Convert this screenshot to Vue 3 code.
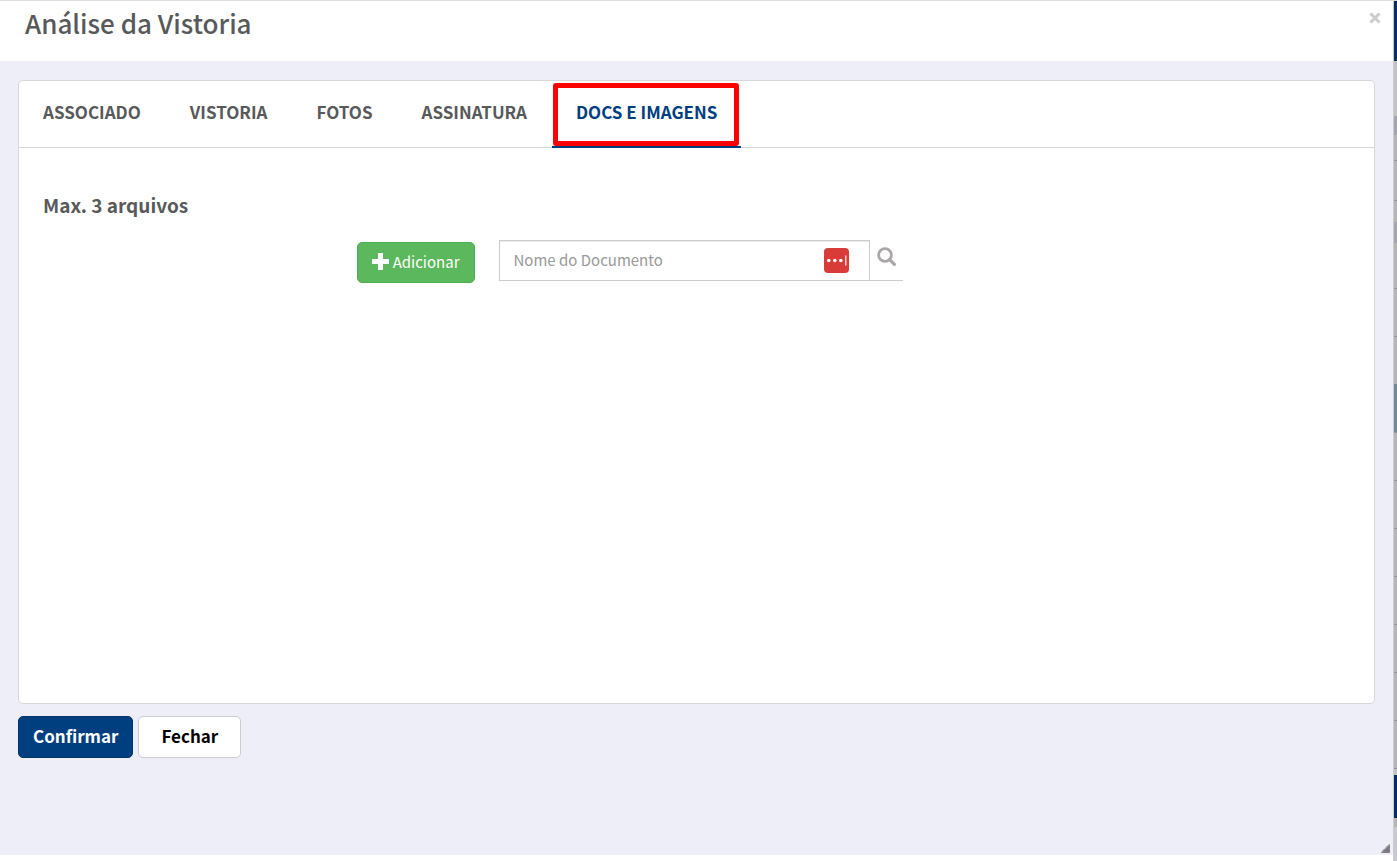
<template>
  <div class="page">
    <section class="dialog" role="dialog" aria-labelledby="dialog-title">
      <header class="dialog-header">
        <h1 id="dialog-title" class="dialog-title">Análise da Vistoria</h1>
        <button class="close" type="button" aria-label="Fechar janela">
          <svg width="12" height="12" viewBox="0 0 12 12" aria-hidden="true">
            <path d="M1.5 1.5l9 9M10.5 1.5l-9 9" stroke="currentColor" stroke-width="3" />
          </svg>
        </button>
      </header>

      <main class="dialog-body">
        <div class="panel">
          <nav class="tabs" role="tablist">
            <button
              v-for="tab in tabs"
              :key="tab"
              class="tab"
              :class="{ active: tab === activeTab }"
              type="button"
              role="tab"
              :aria-selected="tab === activeTab"
              @click="activeTab = tab"
            >
              {{ tab }}
            </button>
          </nav>

          <div class="panel-content" role="tabpanel">
            <h2 class="limit">Max. 3 arquivos</h2>
            <form class="upload" @submit.prevent>
              <button class="btn-add" type="button">
                <svg width="17" height="17" viewBox="0 0 17 17" aria-hidden="true">
                  <path d="M6 0h5v6h6v5h-6v6H6v-6H0V6h6z" fill="currentColor" />
                </svg>
                Adicionar
              </button>
              <div class="search">
                <div class="field">
                  <input
                    v-model="documentName"
                    class="field-input"
                    type="text"
                    placeholder="Nome do Documento"
                    aria-label="Nome do Documento"
                  />
                  <svg class="field-badge" width="25" height="25" viewBox="0 0 25 25" aria-hidden="true">
                    <rect width="25" height="25" rx="4" fill="#d93b38" />
                    <circle cx="4.8" cy="12.5" r="1.8" fill="#fff" />
                    <circle cx="10.8" cy="12.5" r="1.8" fill="#fff" />
                    <circle cx="16.8" cy="12.5" r="1.8" fill="#fff" />
                    <path d="M21.8 7.5v10" stroke="#fff" stroke-width="1.2" />
                  </svg>
                </div>
                <button class="btn-search" type="submit" aria-label="Pesquisar">
                  <svg width="19" height="19" viewBox="0 0 19 19" aria-hidden="true">
                    <circle cx="8" cy="8" r="6.4" fill="none" stroke="currentColor" stroke-width="2.8" />
                    <path d="M12.6 12.6l4.8 4.8" stroke="currentColor" stroke-width="3.2" stroke-linecap="round" />
                  </svg>
                </button>
              </div>
            </form>
          </div>
        </div>

        <div class="actions">
          <button class="btn btn-primary" type="button">Confirmar</button>
          <button class="btn btn-default" type="button">Fechar</button>
        </div>

        <svg class="grip" width="9" height="9" viewBox="0 0 9 9" aria-hidden="true">
          <path d="M0 9L9 0v9z" fill="#8a8489" />
          <path d="M0 8.5L8.5 0M3 8.5L8.5 3M6 8.5L8.5 6" stroke="#4b464a" stroke-dasharray="1 1" />
        </svg>
      </main>
    </section>

    <div class="backdrop" aria-hidden="true"></div>
  </div>
</template>

<script setup>
import { ref } from 'vue'

const tabs = ['ASSOCIADO', 'VISTORIA', 'FOTOS', 'ASSINATURA', 'DOCS E IMAGENS']
const activeTab = ref('DOCS E IMAGENS')
const documentName = ref('')
</script>

<style>
body {
  background: #fff;
}
</style>

<style scoped>
.page {
  box-sizing: border-box;
  display: flex;
  min-height: 100vh;
  border-top: 1px solid #ddd;
  color: #58595b;
  font-family: "Noto Sans CJK SC", "Open Sans", sans-serif;
  font-size: 15px;
  line-height: 20px;
}

.page *,
.page *::before {
  box-sizing: border-box;
}

button,
input {
  font: inherit;
}

button {
  cursor: pointer;
}

.dialog {
  flex: 1;
  display: flex;
  flex-direction: column;
  min-width: 0;
  padding-bottom: 6px;
  border-right: 1px solid #ccc;
  background: #fff;
}

.dialog-header {
  display: flex;
  align-items: flex-start;
  justify-content: space-between;
  height: 60px;
  padding: 4px 12px 0 25px;
}

.dialog-title {
  margin: 0;
  font-size: 26px;
  font-weight: 500;
  line-height: 36px;
}

.close {
  display: flex;
  margin-top: 7px;
  padding: 0;
  border: none;
  background: none;
  color: #ccc;
}

.dialog-body {
  position: relative;
  flex: 1;
  padding: 19px 18px;
  background: #eeeef8;
}

.panel {
  display: flex;
  flex-direction: column;
  min-height: 624px;
  border: 1px solid #d8d8d8;
  border-radius: 5px;
  background: #fff;
}

.tabs {
  display: flex;
  gap: 1px;
  height: 67px;
  border-bottom: 1px solid #d8d8d8;
}

.tab {
  position: relative;
  height: 67px;
  padding: 0 24px 6px;
  border: none;
  background: none;
  color: #58595b;
  font-size: 17px;
  font-weight: 700;
  white-space: nowrap;
}

.tab.active {
  border-bottom: 2px solid #003f7f;
  padding-bottom: 4px;
  color: #003f7f;
}

/* highlight frame over the selected tab */
.tab.active::before {
  content: "";
  position: absolute;
  inset: 2px 2px 0 1px;
  border: 5px solid #f00;
  border-radius: 3px;
}

.panel-content {
  flex: 1;
  padding: 43px 24px 24px;
}

.limit {
  margin: 0;
  font-size: 19px;
  font-weight: 700;
  line-height: 28px;
}

.upload {
  display: flex;
  align-items: flex-start;
  gap: 24px;
  margin: 21px 0 0 24%;
}

.btn-add {
  display: flex;
  align-items: center;
  gap: 4px;
  height: 41px;
  margin-top: 2px;
  padding: 0 14px 2px;
  border: 1px solid #4cae4c;
  border-radius: 5px;
  background: #5cb85c;
  color: #fff;
}

.search {
  display: flex;
  width: 404px;
  border-bottom: 1px solid #ccc;
}

.field {
  position: relative;
  flex: 1;
}

.field-input {
  display: block;
  width: 100%;
  height: 40px;
  padding: 0 48px 2px 14px;
  border: 1px solid #ccc;
  border-bottom: none;
  border-radius: 0;
  outline: none;
  background: #fff;
  box-shadow: inset 0 1px 1px rgba(0, 0, 0, 0.08);
  color: #58595b;
}

.field-input::placeholder {
  color: #999;
  opacity: 1;
}

.field-badge {
  position: absolute;
  top: 8px;
  right: 21px;
}

.btn-search {
  display: flex;
  width: 33px;
  padding: 7px 7px 0;
  border: none;
  background: none;
  color: #aaa6aa;
}

.actions {
  display: flex;
  gap: 5px;
  margin-top: 12px;
}

.btn {
  height: 42px;
  border-radius: 5px;
  font-size: 17px;
  font-weight: 700;
}

.btn-primary {
  padding: 0 14px 2px;
  border: 1px solid #00366d;
  background: #003f7f;
  color: #fff;
}

.btn-default {
  padding: 0 22px 2px;
  border: 1px solid #ccc;
  background: #fff;
  color: #000;
}

.grip {
  position: absolute;
  right: 3px;
  bottom: 2px;
}

/* sliver of the dimmed page behind the dialog */
.backdrop {
  width: 3px;
  background: linear-gradient(
    #002f63 0 60px,
    #c4c4c4 60px 115px,
    #a5a5b0 115px 134px,
    #b5b5b5 134px 159px,
    #949494 159px 160px,
    #b5b5b5 160px 199px,
    #949494 199px 200px,
    #b5b5b5 200px 221px,
    #a5a5b0 221px 242px,
    #b5b5b5 242px 287px,
    #949494 287px 288px,
    #b5b5b5 288px 335px,
    #949494 335px 336px,
    #b5b5b5 336px 383px,
    #75889a 383px 431px,
    #949494 431px 432px,
    #b5b5b5 432px 479px,
    #949494 479px 480px,
    #b5b5b5 480px 527px,
    #949494 527px 528px,
    #b5b5b5 528px 575px,
    #949494 575px 576px,
    #b5b5b5 576px 623px,
    #949494 623px 624px,
    #b5b5b5 624px 671px,
    #949494 671px 672px,
    #b5b5b5 672px 719px,
    #949494 719px 720px,
    #b5b5b5 720px 767px,
    #949494 767px 768px,
    #c4c4c4 768px 774px,
    #002f63 774px 817px,
    #b5b5b5 817px 826px,
    #c8c8d3 826px
  );
}
</style>
